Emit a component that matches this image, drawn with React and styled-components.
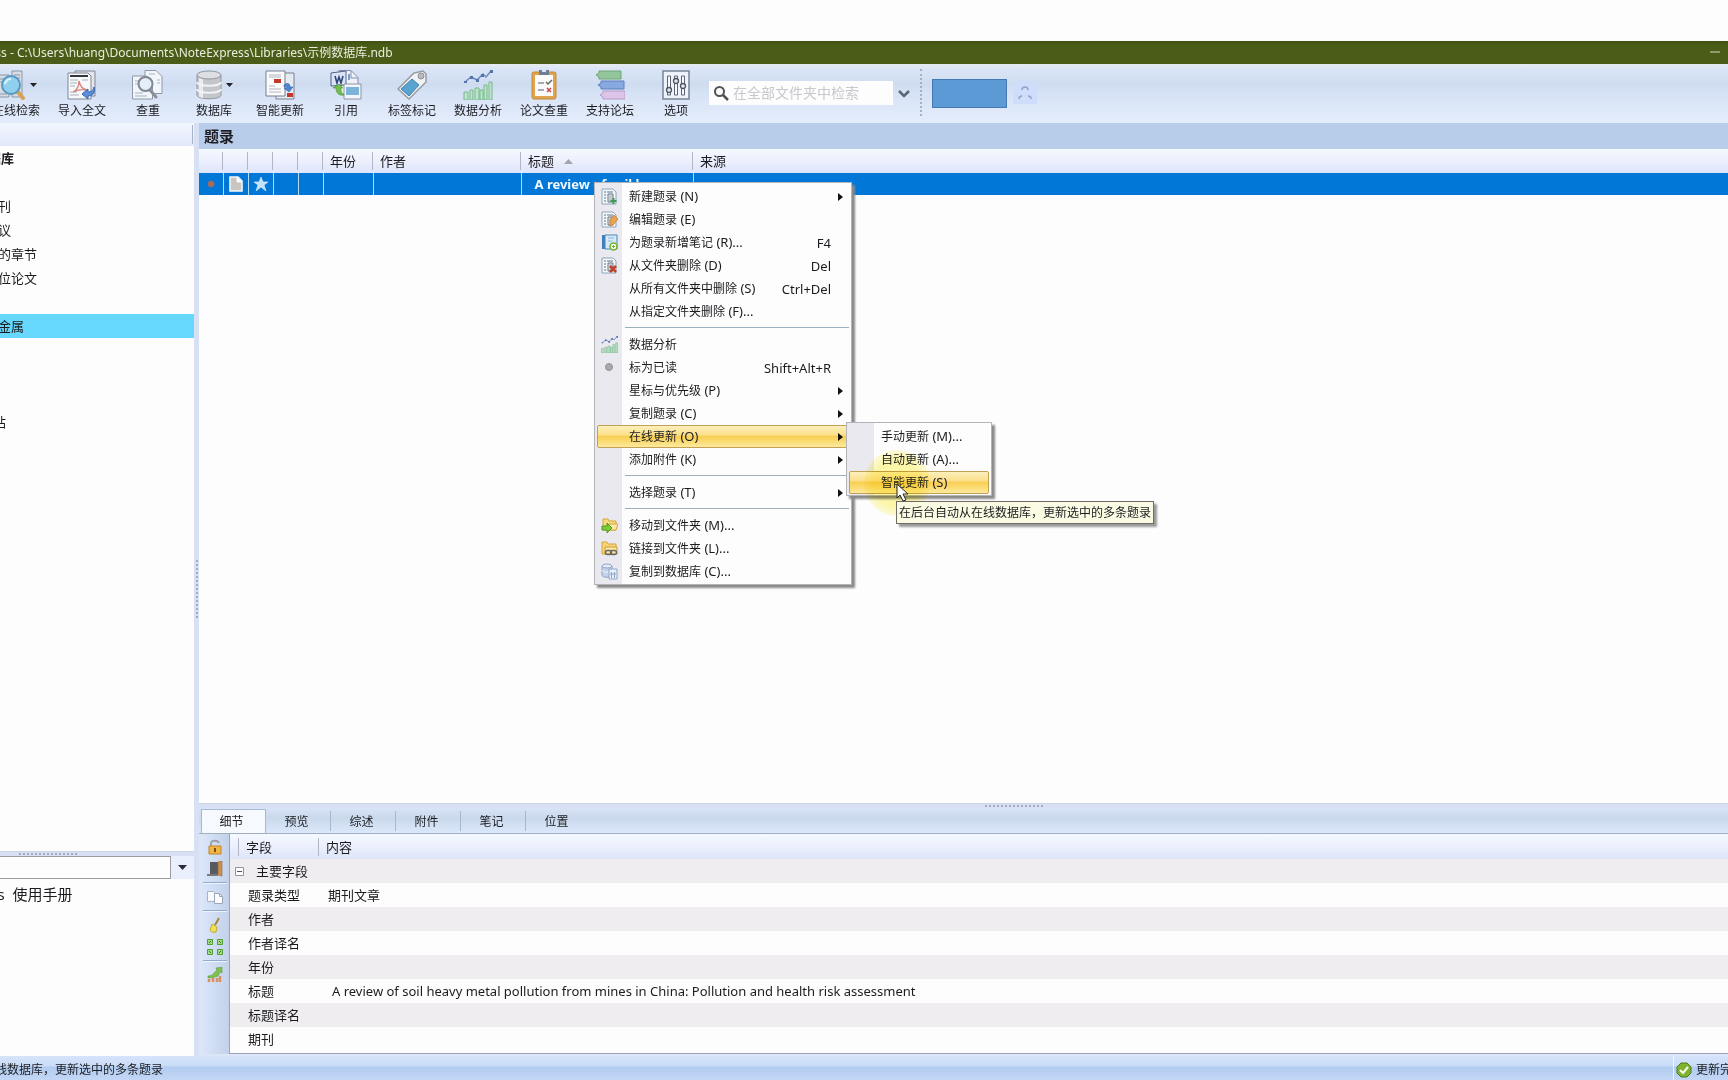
import React from "react";
import styled, { createGlobalStyle, css } from "styled-components";

const GlobalStyle = createGlobalStyle`
  * { box-sizing: border-box; }
  html, body { margin: 0; padding: 0; background: #fdfdfd; }
  body {
    overflow: hidden;
    font-family: "Noto Sans", "Noto Sans CJK SC", sans-serif;
    font-size: 12px;
    line-height: 16px;
    color: #1c1c20;
  }
  button, input { font: inherit; color: inherit; margin: 0; padding: 0; border: 0; background: none; }
  button { display: block; text-align: left; }
  ul { list-style: none; margin: 0; padding: 0; }
  table { border-collapse: collapse; table-layout: fixed; width: 100%; }
  th, td { padding: 0; font-weight: 400; text-align: left; }
  svg { display: block; flex: none; }
`;

const Desktop = styled.div`
  height: 100vh;
  padding-top: 41px;
  overflow: hidden;
  display: flex;
`;

/* The window hangs over both sides of the screen. */
const Window = styled.div`
  flex: 1 0 auto;
  width: calc(100% + 198px);
  margin: 0 -102px 0 -96px;
  display: flex;
  flex-direction: column;
  background: #dbe6f8;
`;

const TitleBar = styled.header`
  display: flex;
  align-items: center;
  height: 23px;
  padding-left: 32px;
  background: linear-gradient(#3f5013, #4a5d17 20%, #4a5c18);
  color: #e9edde;
  flex: none;
`;
const TitleText = styled.span`
  flex: 1;
  white-space: pre;
`;
const CaptionButton = styled.button`
  width: 46px;
  height: 23px;
  display: flex;
  justify-content: center;
  align-items: center;
`;

const Toolbar = styled.nav`
  display: flex;
  align-items: stretch;
  height: 59px;
  flex: none;
  padding-left: 79px;
  background: linear-gradient(#e6ecf0 0, #dbe5f7 8%, #cfdcf0 34%, #d6e2f5 50%, #e4edfc);
`;
const ToolButton = styled.button`
  width: 66px;
  height: 59px;
  padding-top: 6px;
  display: flex;
  flex-direction: column;
  align-items: center;
  gap: 3px;
`;
const ToolIcon = styled.span`
  display: flex;
  align-items: center;
  gap: 4px;
`;
const SearchBox = styled.label`
  display: flex;
  align-items: center;
  gap: 4px;
  align-self: flex-start;
  width: 184px;
  height: 24px;
  margin-top: 17px;
  padding-left: 4px;
  background: #fdfdfe;
`;
const SearchInput = styled.input`
  width: 150px;
  font-size: 14px;
  outline: 0;
  &::placeholder { color: #c6c8cc; opacity: 1; }
`;
const ChevronButton = styled.button`
  width: 22px;
  height: 59px;
  display: flex;
  align-items: center;
  justify-content: center;
`;
const ToolSeparator = styled.div`
  width: 1px;
  margin: 5px 10px 7px 5px;
  border-left: 2px dotted #a3b0c6;
`;
const BlueButton = styled.button`
  width: 75px;
  height: 29px;
  margin-top: 15px;
  background: #5b9ad4;
  border: 1px solid #4478b4;
`;
const LoaderTile = styled.button`
  width: 24px;
  height: 23px;
  margin: 17px 0 0 6px;
  display: flex;
  align-items: center;
  justify-content: center;
  background: #cfdcfa;
`;

const Body = styled.div`
  display: flex;
  flex: 1;
  min-height: 0;
`;
const Sidebar = styled.aside`
  width: 290px;
  flex: none;
  display: flex;
  flex-direction: column;
  background: #fdfdfd;
`;
const SideHeader = styled.div`
  height: 23px;
  flex: none;
  display: flex;
  justify-content: flex-end;
  padding: 2px 1px;
  background: linear-gradient(#f3f6fe, #e0e8fa);
  &::after { content: ""; width: 1px; background: #a9b2c6; }
`;
const Tree = styled.ul`
  flex: 1;
  min-height: 0;
  font-size: 13px;
`;
const TreeRow = styled.li`
  height: 24px;
  line-height: 24px;
  white-space: nowrap;
  padding-left: ${(p) => 9 + p.$level * 18}px;
  font-weight: ${(p) => (p.$bold ? 700 : 400)};
  background: ${(p) => (p.$selected ? "#66d7fd" : "transparent")};
`;
const Splitter = styled.div`
  flex: none;
  display: flex;
  align-items: center;
  justify-content: center;
  background: #d8e1f4;
  ${(p) => (p.$vertical ? css`width: 5px;` : css`height: 5px; border-top: 1px solid #cdd5e4;`)}
  &::after {
    content: "";
    ${(p) =>
      p.$vertical
        ? css`width: 2px; height: 60px; background: repeating-linear-gradient(#9fabc4 0 2px, transparent 2px 4px);`
        : css`width: 60px; height: 2px; background: repeating-linear-gradient(90deg, #9fabc4 0 2px, transparent 2px 4px);`}
  }
`;
const ComboRow = styled.div`
  display: flex;
  flex: none;
  height: 23px;
  background: #e9effc;
`;
const ComboInput = styled.input`
  flex: 1;
  min-width: 0;
  background: #fdfdfd;
  border: 1px solid #9a9ca2;
`;
const ComboButton = styled.button`
  width: 23px;
  display: flex;
  align-items: center;
  justify-content: center;
`;
const HelpPane = styled.div`
  flex: none;
  height: 177px;
  padding: 3px 0 0 12px;
  font-size: 15px;
  line-height: 24px;
  white-space: pre;
`;

const Main = styled.main`
  flex: 1;
  min-width: 0;
  display: flex;
  flex-direction: column;
`;
const RecordPane = styled.section`
  position: relative;
  flex: 1;
  min-height: 0;
  background: #fdfdfd;
`;
const PaneTitle = styled.h2`
  margin: 0;
  height: 26px;
  padding-left: 5px;
  background: #b8cde9;
  font-size: 15px;
  line-height: 26px;
  font-weight: 700;
`;
const HeadRow = styled.tr`
  height: ${(p) => p.$height}px;
  background: linear-gradient(#f5f9ff, #eceffd 50%, #dce5f9);
`;
const HeadCell = styled.th`
  font-size: 13px;
  line-height: 18px;
  white-space: nowrap;
  padding-left: 7px;
  background: linear-gradient(#b0b6c4, #b0b6c4) right center / 1px 18px no-repeat;
  &:last-child { background: none; }
`;
const HeadLabel = styled.span`
  display: flex;
  align-items: center;
  gap: 10px;
`;
const SelectedRow = styled.tr`
  height: 22px;
  background: #0177d7;
  color: #f2f8ff;
`;
const GridCell = styled.td`
  font-size: 13px;
  line-height: 22px;
  font-weight: 700;
  white-space: nowrap;
  overflow: hidden;
  padding-left: ${(p) => (p.$text ? 13 : 0)}px;
  border-right: 1px solid #b4dafa;
  &:last-child { border-right: 0; }
`;
const CellIcon = styled.span`
  display: flex;
  justify-content: center;
`;

const menuSurface = css`
  position: absolute;
  background: linear-gradient(90deg, #e9e9ef 27px, #fdfdfd 27px);
  border: 1px solid #b3b4b8;
  box-shadow: 3px 3px 2px #8a8a8a;
  padding: 2px 2px 1px;
`;
const ContextMenu = styled.ul`
  ${menuSurface}
  left: 395px;
  top: 59px;
  width: 258px;
  z-index: 2;
`;
const SubMenu = styled.ul`
  ${menuSurface}
  left: calc(100% - 3px);
  top: -3px;
  width: 146px;
  z-index: 3;
`;
const MenuItem = styled.li`
  position: relative;
`;
const MenuButton = styled.button`
  display: flex;
  align-items: center;
  width: 100%;
  height: 23px;
  padding-right: 1px;
  white-space: nowrap;
  border: 1px solid transparent;
  border-radius: 2px;
  ${(p) =>
    p.$active &&
    css`
      border-color: #c3a052;
      background: linear-gradient(#fdf0bd, #fbe08a 42%, #f9cf53 50%, #fbdc75 75%, #fdeaa0);
    `}
`;
const MenuIcon = styled.span`
  width: 31px;
  padding-left: 3px;
  flex: none;
`;
const MenuLabel = styled.span`
  flex: 1;
`;
const Latin = styled.span`
  font-size: 13px;
`;
const ArrowSlot = styled.span`
  width: 13px;
  margin-left: 3px;
  display: flex;
  justify-content: center;
`;
const MenuDivider = styled.li`
  height: 5px;
  margin: 0 0 5px 28px;
  border-bottom: 1px solid #98b0bf;
`;
const Tooltip = styled.div`
  position: absolute;
  left: 697px;
  top: 378px;
  z-index: 5;
  height: 23px;
  padding: 0 2px;
  line-height: 22px;
  white-space: nowrap;
  background: #fbfbe3;
  border: 1px solid #6d6d66;
  box-shadow: 3px 3px 2px #9a9a9a;
`;
const PointerHalo = styled.div`
  position: absolute;
  left: 665px;
  top: 327px;
  z-index: 4;
  width: 66px;
  height: 66px;
  border-radius: 50%;
  background: radial-gradient(rgba(252, 240, 60, 0.5), rgba(252, 240, 90, 0.5) 50%, rgba(252, 244, 130, 0.3) 70%);
  mix-blend-mode: multiply;
`;
const Pointer = styled.div`
  position: absolute;
  left: 697px;
  top: 360px;
  z-index: 6;
`;

const DetailPane = styled.section`
  flex: none;
  display: flex;
  flex-direction: column;
  height: 248px;
`;
const Tabs = styled.div`
  display: flex;
  align-items: stretch;
  height: 26px;
  flex: none;
  padding: 1px 0 0 2px;
  background: linear-gradient(#d9e3f8, #cad8ec 40%, #dbe8fb);
  border-bottom: 1px solid #a2afc0;
`;
const Tab = styled.button`
  width: 65px;
  height: 24px;
  padding: 1px 4px 0 0;
  text-align: center;
  ${(p) =>
    p.$active
      ? css`
          background: #f6fafe;
          border: solid #a9b9d2;
          border-width: 1px 1px 0;
        `
      : css`
          background: linear-gradient(#a7b7cf, #a7b7cf) right center / 1px 20px no-repeat;
          &:last-child { background: none; }
        `}
`;
const DetailBody = styled.div`
  display: flex;
  flex: 1;
  min-height: 0;
  padding: 0 0 2px 2px;
`;
const SideTools = styled.div`
  width: 28px;
  flex: none;
  display: flex;
  flex-direction: column;
  align-items: center;
  padding-top: 2px;
  background: linear-gradient(90deg, #dbe6f9, #c2d2ea);
`;
const SideTool = styled.button`
  height: 22px;
  display: flex;
  align-items: center;
`;
const SideRule = styled.div`
  width: 24px;
  height: 2px;
  margin: 2px 0;
  border-top: 1px solid #93aac8;
  border-bottom: 1px solid #eef4fd;
`;
const FieldTableBox = styled.div`
  flex: 1;
  min-width: 0;
  background: #fdfdfd;
  border-left: 1px solid #98a5b8;
  border-bottom: 1px solid #98a5b8;
`;
const FieldRow = styled.tr`
  height: 24px;
  background: ${(p) => (p.$shaded ? "#efedf0" : "#fdfdfd")};
`;
const FieldCell = styled.td`
  font-size: 13px;
  line-height: 20px;
  white-space: nowrap;
  padding-left: ${(p) => p.$indent}px;
`;
const GroupLabel = styled.span`
  display: flex;
  align-items: center;
  gap: 12px;
  padding-left: 5px;
`;

const StatusBar = styled.footer`
  display: flex;
  justify-content: space-between;
  height: 24px;
  flex: none;
  line-height: 28px;
  white-space: nowrap;
  background: linear-gradient(#d6e4fa, #cbddf7 38%, #b2ccf0 48%, #c3d7f6);
`;
const StatusText = styled.span`
  padding-left: 7px;
`;
const StatusCell = styled.span`
  display: flex;
  align-items: center;
  gap: 4px;
  width: 157px;
  padding: 3px 0 0 2px;
  border-left: 1px solid #f1f6fd;
`;

/* ---------- icons ---------- */
const S = ({ w = 30, h = 30, vb, children }) => (
  <svg width={w} height={h} viewBox={vb || `0 0 ${w} ${h}`} fill="none" aria-hidden="true">{children}</svg>
);
const CaretDown = () => <S w={7} h={4}><path d="M0 0h7L3.5 4z" fill="#23232b" /></S>;
const CaretRight = () => <S w={5} h={8}><path d="M0 0v8l5-4z" fill="#111" /></S>;

const Page = ({ x, y, w = 18, h = 24, fill = "#f2f5fa" }) => (
  <path d={`M${x} ${y}h${w - 6}l6 6v${h - 6}h${-w}z`} fill={fill} stroke="#8d98a8" />
);
const IconOnline = () => (
  <S>
    <path d="M2 5h11v22H2zM16 1h10v26H16z" fill="#d5dce6" stroke="#8c97a7" />
    <path d="M4 9h6M4 12h6M4 24h7M18 5h6M18 8h6M18 23h6" stroke="#8c97a7" />
    <path d="M21 21l6 7" stroke="#d9a253" strokeWidth="4" strokeLinecap="round" />
    <circle cx="15" cy="15" r="9" fill="#8fd0ef" stroke="#5b98c0" strokeWidth="2" />
    <path d="M9 14a6 6 0 0 1 6-5" stroke="#e3f6ff" strokeWidth="2" />
  </S>
);
const IconImport = () => (
  <S>
    <path d="M8 1h20v25H8z" fill="#e2e6ec" stroke="#7f8794" />
    <path d="M1 3h20l3 3v23H1z" fill="#f7f8fa" stroke="#7f8794" />
    <path d="M3 6h18" stroke="#34373e" strokeWidth="2" />
    <path d="M3 10h8M3 13h7M3 16h5M15 10h6M3 25h9M3 22h7" stroke="#a9b0bb" />
    <path d="M6 22c4-2 6-6 6-11 1 5 3 8 8 9-5-1-10 0-14 2z" stroke="#d98078" strokeWidth="1.300" />
    <path d="M27 17c2 7-3 9-6 9v3l-6-5 6-5v3c3 0 5-1 6-5z" fill="#5b8fdb" stroke="#3465ad" />
  </S>
);
const IconDup = () => (
  <S w={32}>
    <Page x={13} y={0.5} w={17} h={23} />
    <Page x={0.5} y={6} w={20} h={23} />
    <path d="M17 4h6M25 10h3M25 13h3M3 11h5M3 14h3M3 23h8M3 26h12" stroke="#a9b3c2" />
    <path d="M18 20l6 7" stroke="#8b8e96" strokeWidth="3" strokeLinecap="round" />
    <circle cx="13.500" cy="14" r="7" fill="#e4edf8" stroke="#7f8794" strokeWidth="2" />
  </S>
);
const IconDb = () => (
  <S w={26}>
    <path d="M1 5v20c0 5 24 5 24 0V5z" fill="#c3c6cb" stroke="#92969d" />
    <path d="M4 8v19M6 9v19" stroke="#e9ebee" strokeWidth="2" />
    <path d="M1 12c0 5 24 5 24 0M1 19c0 5 24 5 24 0" stroke="#f1f2f4" strokeWidth="2" />
    <ellipse cx="13" cy="5" rx="12" ry="4" fill="#dddfe3" stroke="#92969d" />
  </S>
);
const IconSmart = () => (
  <S>
    <path d="M11 3h18v26H11z" fill="#e6eaf1" stroke="#77808f" />
    <path d="M1 1h19v25H1z" fill="#fbfbfc" stroke="#77808f" />
    <path d="M4 5h12M4 7h12M4 16h6M4 19h12M4 22h12" stroke="#b0b4bc" />
    <path d="M9 11h7" stroke="#c5372c" strokeWidth="4" />
    <path d="M22 25h6" stroke="#c5372c" strokeWidth="4" />
    <path d="M19 15c4-3 6-1 6 2h3l-4 5-5-4h3c0-1-1-2-3-1z" fill="#4f86cd" stroke="#2f62a8" strokeWidth=".6" />
  </S>
);
const IconCite = () => (
  <S w={32}>
    <path d="M9 .5h12l7 7V24H9z" fill="#eef2f8" stroke="#8291aa" />
    <path d="M21 1v7h7" stroke="#8291aa" />
    <path d="M19 4v6M15 5v4" stroke="#7b9ed2" strokeWidth="2" />
    <path d="M1 3l15-2v14L1 16z" fill="#dbe4f4" stroke="#50628f" />
    <path d="M5 6l2 7 2-6 2 6 2-7" stroke="#2d4679" strokeWidth="1.600" />
    <path d="M14 14h17v15H14z" fill="#f2f5f9" stroke="#8a94a2" />
    <path d="M16 17h13v8H16z" fill="#7cb3da" />
    <path d="M3 18l6-4 4 4h-2c0 4 1 6 3 7-5 1-8-2-8-7z" fill="#71bd4e" stroke="#4c9632" strokeWidth=".6" />
  </S>
);
const IconTag = () => (
  <S>
    <path d="M17 3l9-2 3 3v8L12 29 1 19z" fill="#f0f2f4" stroke="#979ba2" strokeWidth="1.500" />
    <path d="M15 9l7 6-10 11-8-7z" fill="#58a3cf" stroke="#3e83ae" />
    <circle cx="24" cy="6" r="3" fill="#b7bbc2" stroke="#8b8f96" />
  </S>
);
const IconChart = ({ size = 30 }) => (
  <S w={size} h={size} vb="0 0 30 30">
    <path d="M1 30v-8h4v8zM7 30V20h3v10zM12 30V18h4v12zM17 30V20h3v10zM21 30v-15h3v15zM26 30V12h3v18z" fill="#bfe4ca" stroke="#74b98a" />
    <path d="M2 12l6-5 6 3 6-6 3 3 5-6" stroke="#6d8cbf" strokeWidth="1.500" />
    <path d="M1 11h3v2H1zM7 6h3v3H7zM13 9h3v3h-3zM18 4h3v3h-3zM27 0h3v3h-3z" fill="#5574ac" />
  </S>
);
const IconClip = () => (
  <S w={26}>
    <rect x="1" y="2" width="24" height="27" rx="2" fill="#e0a34e" stroke="#c78a38" />
    <path d="M4 5h18v21H4z" fill="#fbfbfa" />
    <path d="M8 0h10v5H8z" fill="#6e7f96" />
    <path d="M11 0h4v2h-4z" fill="#dbe5f7" />
    <path d="M7 13h6M7 20h6" stroke="#8a93a1" strokeWidth="1.500" />
    <path d="M15 12l2 2 4-4" stroke="#5f6f60" strokeWidth="1.500" />
    <path d="M16 18l4 4M20 18l-4 4" stroke="#c9484b" strokeWidth="1.500" />
  </S>
);
const IconForum = () => (
  <S>
    <path d="M1 5l3-2V1h22v8H4V7z" fill="#93c79b" stroke="#6ea678" />
    <path d="M3 15l3-2v-2h23v8H6v-2z" fill="#87a9e0" stroke="#5c80bf" />
    <path d="M5 25l3-2v-2h22v8H8v-2z" fill="#dcc5e8" stroke="#b79ac9" />
  </S>
);
const IconOptions = () => (
  <S w={28}>
    <path d="M1 1h26v28H1z" fill="#eef2fa" stroke="#7a8496" strokeWidth="1.500" />
    <path d="M5.500 6h3v19h-3zM12.500 6h3v19h-3zM19.500 6h3v19h-3z" fill="#f8fafd" stroke="#5c6472" />
    <g fill="#e2e7f0" stroke="#4e5664" strokeWidth="1.300"><circle cx="7" cy="20" r="2.500" /><circle cx="14" cy="11" r="2.500" /><circle cx="21" cy="16" r="2.500" /></g>
  </S>
);
const IconSearch = () => (
  <S w={16} h={16}><circle cx="6.500" cy="6.500" r="4.500" stroke="#505257" strokeWidth="2" /><path d="M10 10l5 5" stroke="#505257" strokeWidth="2.500" /></S>
);

/* menu icons, 17 x 17 */
const DocBase = () => (
  <>
    <path d="M1 1h11l3 3v12H1z" fill="#f6f9fc" stroke="#8ba5bd" />
    <path d="M3 4h2M3 7h2M3 10h2M3 13h2M6 4h6" stroke="#5f7183" />
    <path d="M7 6h5v8H7z" fill="#eef1f5" stroke="#66717d" />
    <path d="M9 6v8M11 6v8" stroke="#9aa3ad" />
  </>
);
const menuIcons = {
  add: <S w={17} h={17}><DocBase /><path d="M12.500 10v6M9.500 13h6" stroke="#3f9a53" strokeWidth="2" /></S>,
  edit: <S w={17} h={17}><DocBase /><path d="M9 9l4-5 4 4-5 6-3 1z" fill="#e9a450" stroke="#bd7631" strokeWidth=".7" /></S>,
  note: (
    <S w={17} h={17}>
      <path d="M1 1h3v14H1z" fill="#3f7fb6" /><path d="M4 1h12v14H4z" fill="#d5e9f8" stroke="#4a87b9" />
      <path d="M7 4h6M7 7h4" stroke="#8db8da" /><circle cx="12.500" cy="12.500" r="3.500" fill="#fff" stroke="#70b52e" strokeWidth="1.600" /><path d="M12.500 11v3M11 12.500h3" stroke="#70b52e" />
    </S>
  ),
  del: <S w={17} h={17}><DocBase /><path d="M9 9l6 6M15 9l-6 6" stroke="#c1402b" strokeWidth="2.600" /></S>,
  chart: <IconChart size={17} />,
  dot: <S w={17} h={17}><circle cx="8" cy="8" r="3.500" fill="#a9a9ac" stroke="#929296" /></S>,
  move: (
    <S w={17} h={17}>
      <path d="M2 2h5l1 2h7v9H2z" fill="#f6dc7f" stroke="#d8a53c" /><path d="M8 7h9l-2 6H7z" fill="#fbeaa6" stroke="#d8a53c" />
      <path d="M1 9h5V6l5 5-5 5v-3H1z" fill="#7ccc3a" stroke="#4c9a1f" />
    </S>
  ),
  link: (
    <S w={17} h={17}>
      <path d="M1 2h5l1 2h8v10H1z" fill="#f6d47b" stroke="#d8a53c" /><path d="M4 7h12v7H4z" fill="#fbe6a0" stroke="#cf9c3b" />
      <rect x="4.500" y="10.500" width="6" height="4" rx="2" stroke="#66686d" strokeWidth="1.400" /><rect x="9.500" y="10.500" width="6" height="4" rx="2" stroke="#66686d" strokeWidth="1.400" />
    </S>
  ),
  copydb: (
    <S w={17} h={17}>
      <path d="M1 3v9c0 3 10 3 10 0V3z" fill="#c5d2ea" stroke="#8ea4cb" /><ellipse cx="6" cy="3" rx="5" ry="2" fill="#e5ecf8" stroke="#8ea4cb" />
      <path d="M1 7c0 3 10 3 10 0" stroke="#f1f5fb" /><path d="M8 6h8v10H8z" fill="#e9eff9" stroke="#8ea4cb" /><path d="M10.500 9v6M13.500 9v6M9 11h6" stroke="#8ea4cb" />
    </S>
  ),
};

/* detail toolbar icons, 16 x 16 */
const IconLock = () => (
  <S w={16} h={16}><path d="M4 8V4c0-3 7-3 8 0" stroke="#9aa0a8" strokeWidth="1.800" /><path d="M2 7h12v8H2z" fill="#f0b548" stroke="#c48527" /><path d="M8 9v4" stroke="#7d4d12" strokeWidth="2" /></S>
);
const IconDoor = () => (
  <S w={16} h={16}><path d="M3 1h9v13H3z" fill="#585a60" /><path d="M11 1l4-1v15l-4-1z" fill="#c98f55" stroke="#9a6636" strokeWidth=".6" /><path d="M0 14h11" stroke="#77797e" strokeWidth="2" /></S>
);
const IconCopy = () => (
  <S w={16} h={16}><path d="M.5 2.500h6l2 2v8h-8z" fill="#f7f9fc" stroke="#a9b3c4" /><path d="M7.500 4.500h5l3 3v7h-8z" fill="#fdfdfe" stroke="#9aa6ba" /><path d="M12.500 4.500v3h3" stroke="#9aa6ba" /></S>
);
const IconBroom = () => (
  <S w={16} h={16}><path d="M8 8l4-7" stroke="#a88132" strokeWidth="1.800" /><path d="M5 7l5 3-1 5c-3 1-5 0-6-2z" fill="#efe05c" stroke="#c2ac32" /></S>
);
const IconGrid = () => (
  <S w={16} h={16}>
    <g fill="#a7d88d" stroke="#4f9f35"><path d="M.5.500h5v5h-5zM10.500.500h5v5h-5zM.5 10.500h5v5h-5zM10.500 10.500h5v5h-5z" /></g>
    <path d="M2 4l2-2M12 2l2 2M2 12l2 2M12 14l2-2" stroke="#2e7a19" />
  </S>
);
const IconGrow = () => (
  <S w={16} h={16}>
    <path d="M2 15v-3M6 15v-4M10 15v-4M13 15V9" stroke="#d98e5c" strokeWidth="2.500" />
    <path d="M1 9c3 0 5-1 7-4l2-2-1-2 6-1v6l-2-1-2 4c-3 1-7 2-10 2z" fill="#7fc04c" stroke="#5a9a36" strokeWidth=".6" />
  </S>
);

/* ---------- data ---------- */
const tools = [
  { label: "在线检索", icon: <IconOnline />, drop: true },
  { label: "导入全文", icon: <IconImport /> },
  { label: "查重", icon: <IconDup /> },
  { label: "数据库", icon: <IconDb />, drop: true },
  { label: "智能更新", icon: <IconSmart /> },
  { label: "引用", icon: <IconCite /> },
  { label: "标签标记", icon: <IconTag /> },
  { label: "数据分析", icon: <IconChart /> },
  { label: "论文查重", icon: <IconClip /> },
  { label: "支持论坛", icon: <IconForum /> },
  { label: "选项", icon: <IconOptions /> },
];
const tree = [
  { text: "示例数据库", level: 2, bold: true },
  { text: "", level: 3 },
  { text: "期刊", level: 4 },
  { text: "会议", level: 4 },
  { text: "书的章节", level: 4 },
  { text: "学位论文", level: 4 },
  { text: "", level: 3 },
  { text: "重金属", level: 4, selected: true },
  { text: "", level: 3 },
  { text: "", level: 3 },
  { text: "", level: 3 },
  { text: "回收站", level: 3 },
];
const menu = [
  { text: "新建题录", key: "(N)", icon: "add", arrow: true },
  { text: "编辑题录", key: "(E)", icon: "edit" },
  { text: "为题录新增笔记", key: "(R)...", icon: "note", shortcut: "F4" },
  { text: "从文件夹删除", key: "(D)", icon: "del", shortcut: "Del" },
  { text: "从所有文件夹中删除", key: "(S)", shortcut: "Ctrl+Del" },
  { text: "从指定文件夹删除", key: "(F)..." },
  null,
  { text: "数据分析", icon: "chart" },
  { text: "标为已读", icon: "dot", shortcut: "Shift+Alt+R" },
  { text: "星标与优先级", key: "(P)", arrow: true },
  { text: "复制题录", key: "(C)", arrow: true },
  {
    text: "在线更新", key: "(O)", arrow: true, active: true,
    children: [
      { text: "手动更新", key: "(M)..." },
      { text: "自动更新", key: "(A)..." },
      { text: "智能更新", key: "(S)", active: true },
    ],
  },
  { text: "添加附件", key: "(K)", arrow: true },
  null,
  { text: "选择题录", key: "(T)", arrow: true },
  null,
  { text: "移动到文件夹", key: "(M)...", icon: "move" },
  { text: "链接到文件夹", key: "(L)...", icon: "link" },
  { text: "复制到数据库", key: "(C)...", icon: "copydb" },
];
const title = "A review of soil heavy metal pollution from mines in China: Pollution and health risk assessment";
const fields = [
  ["题录类型", "期刊文章"],
  ["作者", ""],
  ["作者译名", ""],
  ["年份", ""],
  ["标题", title],
  ["标题译名", ""],
  ["期刊", ""],
];
const tabs = ["细节", "预览", "综述", "附件", "笔记", "位置"];
const hint = "在后台自动从在线数据库，更新选中的多条题录";

function MenuEntry({ item }) {
  if (!item) return <MenuDivider role="separator" />;
  return (
    <MenuItem>
      <MenuButton type="button" $active={item.active}>
        <MenuIcon>{item.icon && menuIcons[item.icon]}</MenuIcon>
        <MenuLabel>{item.text}{item.key && <Latin> {item.key}</Latin>}</MenuLabel>
        {item.shortcut && <Latin>{item.shortcut}</Latin>}
        <ArrowSlot>{item.arrow && <CaretRight />}</ArrowSlot>
      </MenuButton>
      {item.children && (
        <SubMenu>{item.children.map((c) => <MenuEntry key={c.text} item={c} />)}</SubMenu>
      )}
    </MenuItem>
  );
}

export default function App() {
  return (
    <Desktop>
      <GlobalStyle />
      <Window>
        <TitleBar>
          <TitleText>NoteExpress - C:\Users\huang\Documents\NoteExpress\Libraries\示例数据库.ndb</TitleText>
          <CaptionButton type="button" aria-label="最小化"><S w={10} h={10}><path d="M0 4h10" stroke="#d3dcb8" /></S></CaptionButton>
          <CaptionButton type="button" aria-label="最大化"><S w={10} h={10}><path d="M.5.5h9v9h-9z" stroke="#d3dcb8" /></S></CaptionButton>
          <CaptionButton type="button" aria-label="关闭"><S w={10} h={10}><path d="M0 0l10 10M10 0L0 10" stroke="#d3dcb8" /></S></CaptionButton>
        </TitleBar>

        <Toolbar>
          {tools.map((t) => (
            <ToolButton type="button" key={t.label}>
              <ToolIcon>{t.icon}{t.drop && <CaretDown />}</ToolIcon>
              {t.label}
            </ToolButton>
          ))}
          <SearchBox>
            <IconSearch />
            <SearchInput type="text" aria-label="检索" placeholder="在全部文件夹中检索" />
          </SearchBox>
          <ChevronButton type="button" aria-label="检索范围">
            <S w={12} h={8}><path d="M1 1l5 5 5-5" stroke="#5d6675" strokeWidth="2.500" /></S>
          </ChevronButton>
          <ToolSeparator />
          <BlueButton type="button" aria-label="横幅" />
          <LoaderTile type="button" aria-label="加载">
            <S w={14} h={14}><path d="M4 4c0-4 6-4 6 0M1 13c0-2 1-3 3-3M13 13c0-2-1-3-3-3" stroke="#8fa5c8" strokeWidth="1.500" /></S>
          </LoaderTile>
        </Toolbar>

        <Body>
          <Sidebar>
            <SideHeader />
            <Tree>
              {tree.map((r, i) => (
                <TreeRow key={i} $level={r.level} $bold={r.bold} $selected={r.selected}>{r.text}</TreeRow>
              ))}
            </Tree>
            <Splitter />
            <ComboRow>
              <ComboInput type="text" aria-label="标签" />
              <ComboButton type="button" aria-label="展开"><S w={9} h={5}><path d="M0 0h9L4.500 5z" fill="#2a2d36" /></S></ComboButton>
            </ComboRow>
            <HelpPane>NoteExpress  使用手册</HelpPane>
          </Sidebar>
          <Splitter $vertical />
          <Main>
            <RecordPane>
              <PaneTitle>题录</PaneTitle>
              <table>
                <colgroup>
                  {[24, 25, 25, 25, 25, 50, 148, 172].map((w, i) => <col key={i} width={w} />)}
                  <col />
                </colgroup>
                <thead>
                  <HeadRow $height={24}>
                    <HeadCell /><HeadCell /><HeadCell /><HeadCell /><HeadCell />
                    <HeadCell>年份</HeadCell>
                    <HeadCell>作者</HeadCell>
                    <HeadCell><HeadLabel>标题<S w={9} h={5}><path d="M0 5h9L4.500 0z" fill="#a2a5ae" /></S></HeadLabel></HeadCell>
                    <HeadCell>来源</HeadCell>
                  </HeadRow>
                </thead>
                <tbody>
                  <SelectedRow>
                    <GridCell><CellIcon><S w={8} h={8}><circle cx="4" cy="4" r="3" fill="#b4664e" stroke="#8d6f7c" /></S></CellIcon></GridCell>
                    <GridCell><CellIcon><S w={14} h={16}><path d="M1 1h8l4 4v10H1z" fill="#c9c6c2" stroke="#f4f8fc" strokeWidth="1.600" /><path d="M8 1v5h5" fill="#fff" stroke="#f4f8fc" /></S></CellIcon></GridCell>
                    <GridCell><CellIcon><S w={14} h={14}><path d="M7 0l2 5h5l-4 3 2 6-5-4-5 4 2-6-4-3h5z" fill="#c3e2fa" stroke="#e7f4ff" strokeWidth=".6" /></S></CellIcon></GridCell>
                    <GridCell /><GridCell /><GridCell /><GridCell />
                    <GridCell $text>{title}</GridCell>
                    <GridCell />
                  </SelectedRow>
                </tbody>
              </table>

              <ContextMenu>
                {menu.map((m, i) => <MenuEntry key={i} item={m} />)}
              </ContextMenu>
              <PointerHalo />
              <Tooltip role="tooltip">{hint}</Tooltip>
              <Pointer>
                <S w={13} h={19}><path d="M1 1v14l3-3 3 6 3-1-3-6h5z" fill="#fff" stroke="#222" /></S>
              </Pointer>
            </RecordPane>
            <Splitter />
            <DetailPane>
              <Tabs role="tablist">
                {tabs.map((t, i) => <Tab type="button" role="tab" key={t} $active={i === 0}>{t}</Tab>)}
              </Tabs>
              <DetailBody>
                <SideTools>
                  <SideTool type="button" aria-label="锁定"><IconLock /></SideTool>
                  <SideTool type="button" aria-label="退出"><IconDoor /></SideTool>
                  <SideRule />
                  <SideTool type="button" aria-label="复制"><IconCopy /></SideTool>
                  <SideRule />
                  <SideTool type="button" aria-label="清理"><IconBroom /></SideTool>
                  <SideTool type="button" aria-label="布局"><IconGrid /></SideTool>
                  <SideRule />
                  <SideTool type="button" aria-label="趋势"><IconGrow /></SideTool>
                </SideTools>
                <FieldTableBox>
                  <table>
                    <colgroup><col width={9} /><col width={80} /><col /></colgroup>
                    <thead>
                      <HeadRow $height={25}><HeadCell /><HeadCell>字段</HeadCell><HeadCell>内容</HeadCell></HeadRow>
                    </thead>
                    <tbody>
                      <FieldRow $shaded>
                        <FieldCell colSpan={3} $indent={0}>
                          <GroupLabel>
                            <S w={9} h={9}><path d="M.5.500h8v8h-8z" fill="#fdfdfd" stroke="#8f96a3" /><path d="M2 4.500h5" stroke="#4c5565" /></S>
                            主要字段
                          </GroupLabel>
                        </FieldCell>
                      </FieldRow>
                      {fields.map(([k, v], i) => (
                        <FieldRow key={k} $shaded={i % 2 === 1}>
                          <FieldCell $indent={0} />
                          <FieldCell $indent={9}>{k}</FieldCell>
                          <FieldCell $indent={k === "标题" ? 13 : 9}>{v}</FieldCell>
                        </FieldRow>
                      ))}
                    </tbody>
                  </table>
                </FieldTableBox>
              </DetailBody>
            </DetailPane>
          </Main>
        </Body>

        <StatusBar>
          <StatusText>{hint}</StatusText>
          <StatusCell>
            <S w={16} h={16}><path d="M5 1h6l4 4v6l-4 4H5l-4-4V5z" fill="#7fb432" stroke="#4e7a1c" /><path d="M4 8l3 3 5-6" stroke="#fbfde9" strokeWidth="2" /></S>
            更新完成
          </StatusCell>
        </StatusBar>
      </Window>
    </Desktop>
  );
}
